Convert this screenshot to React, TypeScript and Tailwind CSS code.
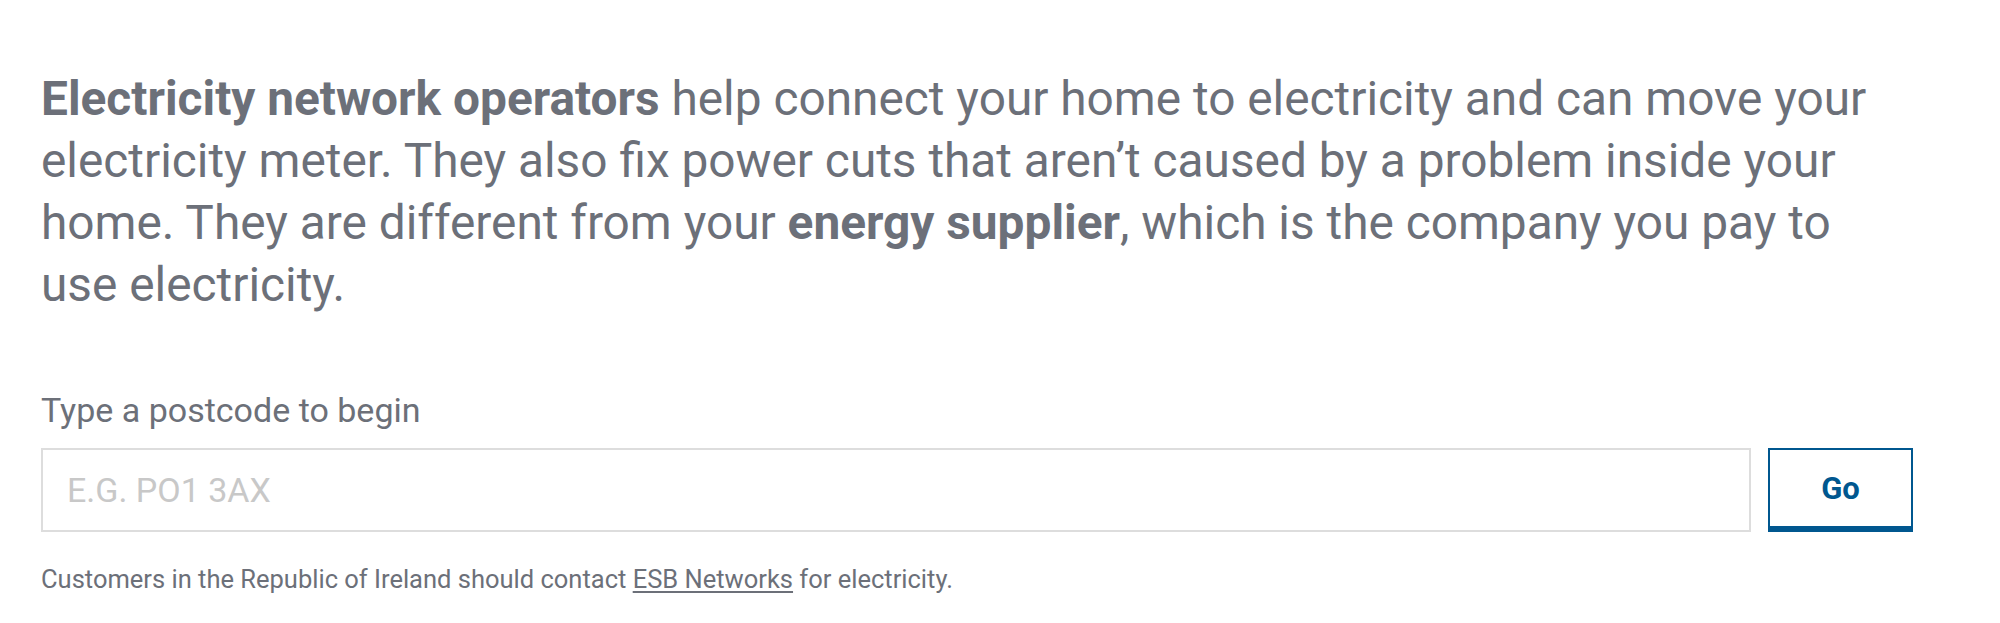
import React from "react";

// Buscador de operador de red eléctrica por código postal
export default function App() {
  return (
    <div className="min-h-screen bg-white text-[#6c7079] font-['Roboto','Liberation_Sans',sans-serif]">
      <div className="w-[1872px] ml-[41px] pt-[68px]">
        {/* Texto introductorio */}
        <p className="max-w-[1860px] text-[47.8px] leading-[62px]">
          <strong className="font-bold">Electricity network operators</strong> help connect your
          home to electricity and can move your electricity meter. They also fix power cuts that
          aren’t caused by a problem inside your home. They are different from your{" "}
          <strong className="font-bold">energy supplier</strong>, which is the company you pay to
          use electricity.
        </p>

        {/* Formulario de código postal */}
        <form className="mt-[71px]" onSubmit={(e) => e.preventDefault()}>
          <label htmlFor="postcode" className="block text-[34px] leading-[46px]">
            Type a postcode to begin
          </label>
          <div className="flex gap-[17px] mt-[15px]">
            <input
              id="postcode"
              type="text"
              placeholder="E.G. PO1 3AX"
              className="flex-1 h-[84px] border-2 border-[#dddddd] bg-white px-[24px] text-[34px] text-[#333] placeholder:text-[#c8c8c8] outline-none"
            />
            <button
              type="submit"
              className="w-[145px] h-[84px] border-2 border-b-[6px] border-[#00578f] bg-white pt-[3px] text-[#00578f] text-[31px] font-bold"
            >
              Go
            </button>
          </div>
        </form>

        {/* Nota para Irlanda */}
        <p className="mt-[31px] text-[25.5px] leading-[33px]">
          Customers in the Republic of Ireland should contact{" "}
          <a href="#" className="underline underline-offset-[3px]">
            ESB Networks
          </a>{" "}
          for electricity.
        </p>
      </div>
    </div>
  );
}
